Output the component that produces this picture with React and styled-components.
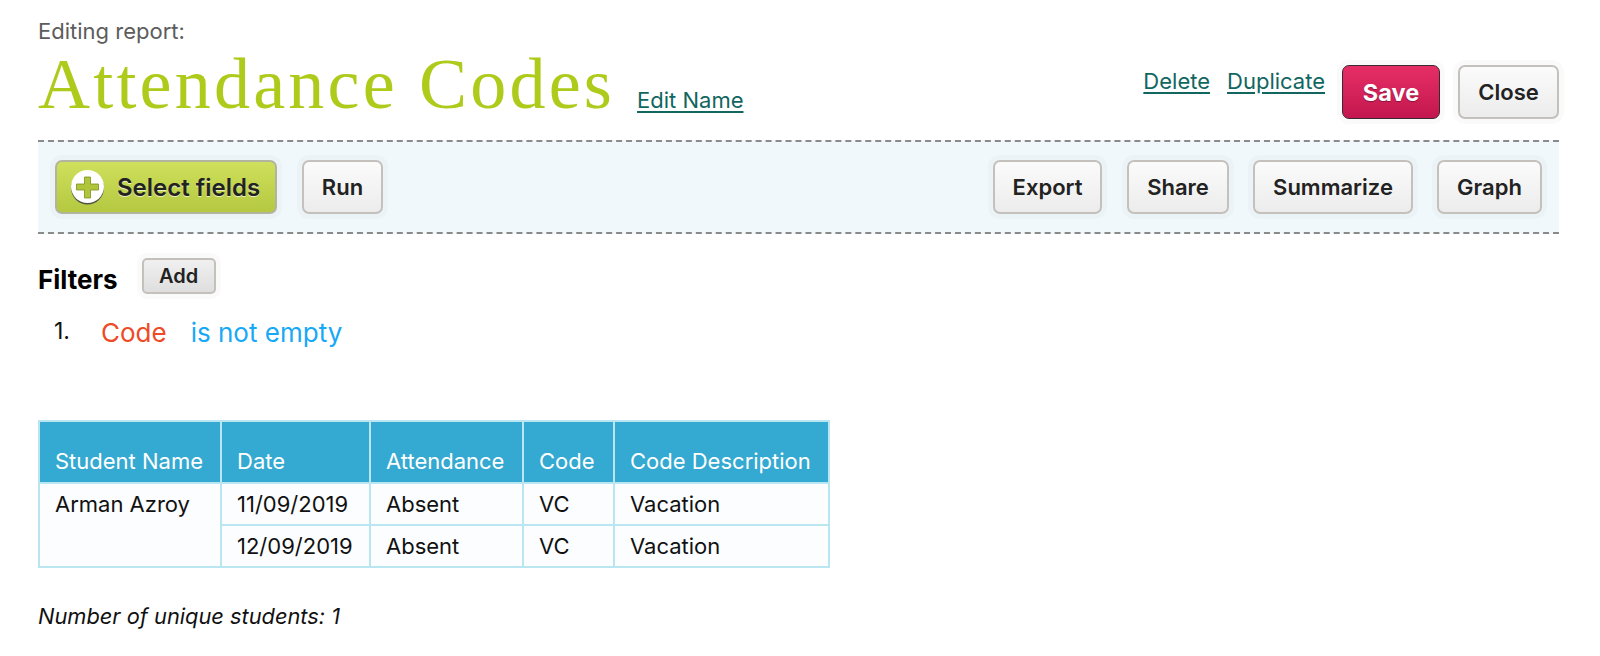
import React from "react";
import styled, { createGlobalStyle } from "styled-components";

const GlobalStyle = createGlobalStyle`
  html, body {
    margin: 0;
    padding: 0;
    background: #fff;
    font-family: "Inter", "Liberation Sans", sans-serif;
    color: #111;
  }
`;

const Page = styled.div`
  box-sizing: border-box;
  width: 1600px;
  height: 656px;
  padding: 19px 41px 0 38px;
  overflow: hidden;
`;

const Overline = styled.div`
  font-size: 22px;
  line-height: 24px;
  color: #5c5c5c;
`;

const TitleRow = styled.div`
  display: flex;
  justify-content: space-between;
  align-items: flex-start;
  height: 97px;
`;

const TitleGroup = styled.div`
  display: flex;
  align-items: baseline;
  gap: 22px;
  padding-top: 1px;
`;

const Title = styled.h1`
  margin: 0;
  font-family: "Liberation Serif", serif;
  font-weight: 400;
  font-size: 72px;
  line-height: 80px;
  letter-spacing: 3.2px;
  color: #aecb1b;
  white-space: nowrap;
`;

const TextLink = styled.a`
  font-size: 22px;
  line-height: 26px;
  color: #11665f;
  text-decoration: underline;
  text-underline-offset: 3px;
  white-space: nowrap;
`;

const TitleActions = styled.div`
  display: flex;
  align-items: flex-start;
  padding-top: 22px;
`;

const ActionLinks = styled.div`
  display: flex;
  gap: 17px;
  margin-right: 17px;
  padding-top: 3px;
`;

const Button = styled.button`
  box-sizing: border-box;
  height: ${(p) => p.$height || 54}px;
  width: ${(p) => p.$width}px;
  margin-left: ${(p) => p.$gap || 0}px;
  padding: 0;
  border-radius: 7px;
  border: 2px solid #c4c1bd;
  background: linear-gradient(#fbfbfb, #ececec);
  box-shadow: 0 0 0 5px rgba(170, 170, 170, 0.06);
  font-family: inherit;
  font-size: 22px;
  font-weight: 600;
  color: #222;
`;

const SaveButton = styled(Button)`
  border: 1px solid #3a2a30;
  background: linear-gradient(#e62e66, #c4174f);
  color: #fff;
  font-size: 23.5px;
  font-weight: 700;
  text-shadow: 0 1px 1px rgba(0, 0, 0, 0.35);
`;

const Toolbar = styled.div`
  display: flex;
  justify-content: space-between;
  align-items: center;
  box-sizing: border-box;
  height: 94px;
  padding: 0 17px;
  background: #f1f8fb;
  border-top: 2px dashed #8a8a8a;
  border-bottom: 2px dashed #8a8a8a;
`;

const ToolGroup = styled.div`
  display: flex;
  align-items: center;
`;

const SelectButton = styled(Button)`
  display: flex;
  align-items: center;
  gap: 12px;
  padding-left: 13px;
  border: 2px solid #b2b4a0;
  background: linear-gradient(#cfe05c, #b5c840);
  text-shadow: 0 1px 0 rgba(255, 255, 255, 0.7);
  font-size: 24px;
`;

const PlusBadge = styled.svg`
  width: 35px;
  height: 35px;
  flex: none;
`;

const FiltersRow = styled.div`
  display: flex;
  align-items: flex-start;
  gap: 24px;
  margin-top: 24px;
  height: 40px;
`;

const FiltersLabel = styled.div`
  font-size: 26px;
  line-height: 44px;
  font-weight: 700;
  color: #000;
`;

const AddButton = styled(Button)`
  background: linear-gradient(#f0f0f0, #dedede);
  font-size: 20px;
  border-radius: 5px;
`;

const FilterItem = styled.div`
  display: flex;
  align-items: flex-start;
  margin-top: 18px;
  font-size: 26px;
  line-height: 34px;
`;

const FilterNumber = styled.span`
  width: 47px;
  padding-left: 16px;
  font-size: 23px;
  line-height: 30px;
  color: #111;
`;

const FilterField = styled.span`
  color: #ee4a26;
  margin-right: 24px;
`;

const FilterOperator = styled.span`
  color: #17a9f5;
`;

const ReportTable = styled.table`
  border-collapse: collapse;
  table-layout: fixed;
  width: 790px;
  margin-top: 70px;
  font-size: 22px;
`;

const HeadCell = styled.th`
  box-sizing: border-box;
  height: 62px;
  padding: 18px 0 0 15px;
  background: #34a9d1;
  border: 2px solid #b9e6f0;
  color: #fff;
  font-weight: 400;
  text-align: left;
  line-height: 34px;
  white-space: nowrap;
`;

const Cell = styled.td`
  box-sizing: border-box;
  height: 42px;
  padding: 0 0 0 15px;
  background: #fbfdff;
  border: 2px solid #b9e6f0;
  color: #111;
  vertical-align: ${(p) => (p.rowSpan ? "top" : "middle")};
  line-height: 40px;
  white-space: nowrap;
`;

const Summary = styled.p`
  margin: 34px 0 0;
  font-size: 21.8px;
  line-height: 28px;
  font-style: italic;
  color: #111;
`;

const columns = [
  { label: "Student Name", width: 182 },
  { label: "Date", width: 149 },
  { label: "Attendance", width: 153 },
  { label: "Code", width: 91 },
  { label: "Code Description", width: 215 },
];

const rows = [
  ["11/09/2019", "Absent", "VC", "Vacation"],
  ["12/09/2019", "Absent", "VC", "Vacation"],
];

const App = () => (
  <Page>
    <GlobalStyle />
    <Overline>Editing report:</Overline>
    <TitleRow>
      <TitleGroup>
        <Title>Attendance Codes</Title>
        <TextLink href="#">Edit Name</TextLink>
      </TitleGroup>
      <TitleActions>
        <ActionLinks>
          <TextLink href="#">Delete</TextLink>
          <TextLink href="#">Duplicate</TextLink>
        </ActionLinks>
        <SaveButton $width={98}>Save</SaveButton>
        <Button $width={101} $gap={18}>
          Close
        </Button>
      </TitleActions>
    </TitleRow>
    <Toolbar>
      <ToolGroup>
        <SelectButton $width={222}>
          <PlusBadge viewBox="0 0 35 35">
            <circle cx="17.5" cy="18" r="16.5" fill="#4f5244" />
            <circle cx="17.5" cy="16.5" r="16.5" fill="#fff" />
            <path
              d="M14.5 7h6v7h8v6h-8v8h-6v-8h-8v-6h8z"
              fill="#b0c53a"
              stroke="#7d8f22"
              strokeWidth="0.8"
            />
          </PlusBadge>
          Select fields
        </SelectButton>
        <Button $width={81} $gap={25}>
          Run
        </Button>
      </ToolGroup>
      <ToolGroup>
        <Button $width={109}>Export</Button>
        <Button $width={102} $gap={25}>
          Share
        </Button>
        <Button $width={160} $gap={24}>
          Summarize
        </Button>
        <Button $width={105} $gap={24}>
          Graph
        </Button>
      </ToolGroup>
    </Toolbar>
    <FiltersRow>
      <FiltersLabel>Filters</FiltersLabel>
      <AddButton $width={74} $height={36}>
        Add
      </AddButton>
    </FiltersRow>
    <FilterItem>
      <FilterNumber>1.</FilterNumber>
      <FilterField>Code</FilterField>
      <FilterOperator>is not empty</FilterOperator>
    </FilterItem>
    <ReportTable>
      <colgroup>
        {columns.map((c) => (
          <col key={c.label} width={c.width} />
        ))}
      </colgroup>
      <thead>
        <tr>
          {columns.map((c) => (
            <HeadCell key={c.label}>{c.label}</HeadCell>
          ))}
        </tr>
      </thead>
      <tbody>
        {rows.map((row, i) => (
          <tr key={row[0]}>
            {i === 0 && <Cell rowSpan={2}>Arman Azroy</Cell>}
            {row.map((value, j) => (
              <Cell key={j}>{value}</Cell>
            ))}
          </tr>
        ))}
      </tbody>
    </ReportTable>
    <Summary>Number of unique students: 1</Summary>
  </Page>
);

export default App;
